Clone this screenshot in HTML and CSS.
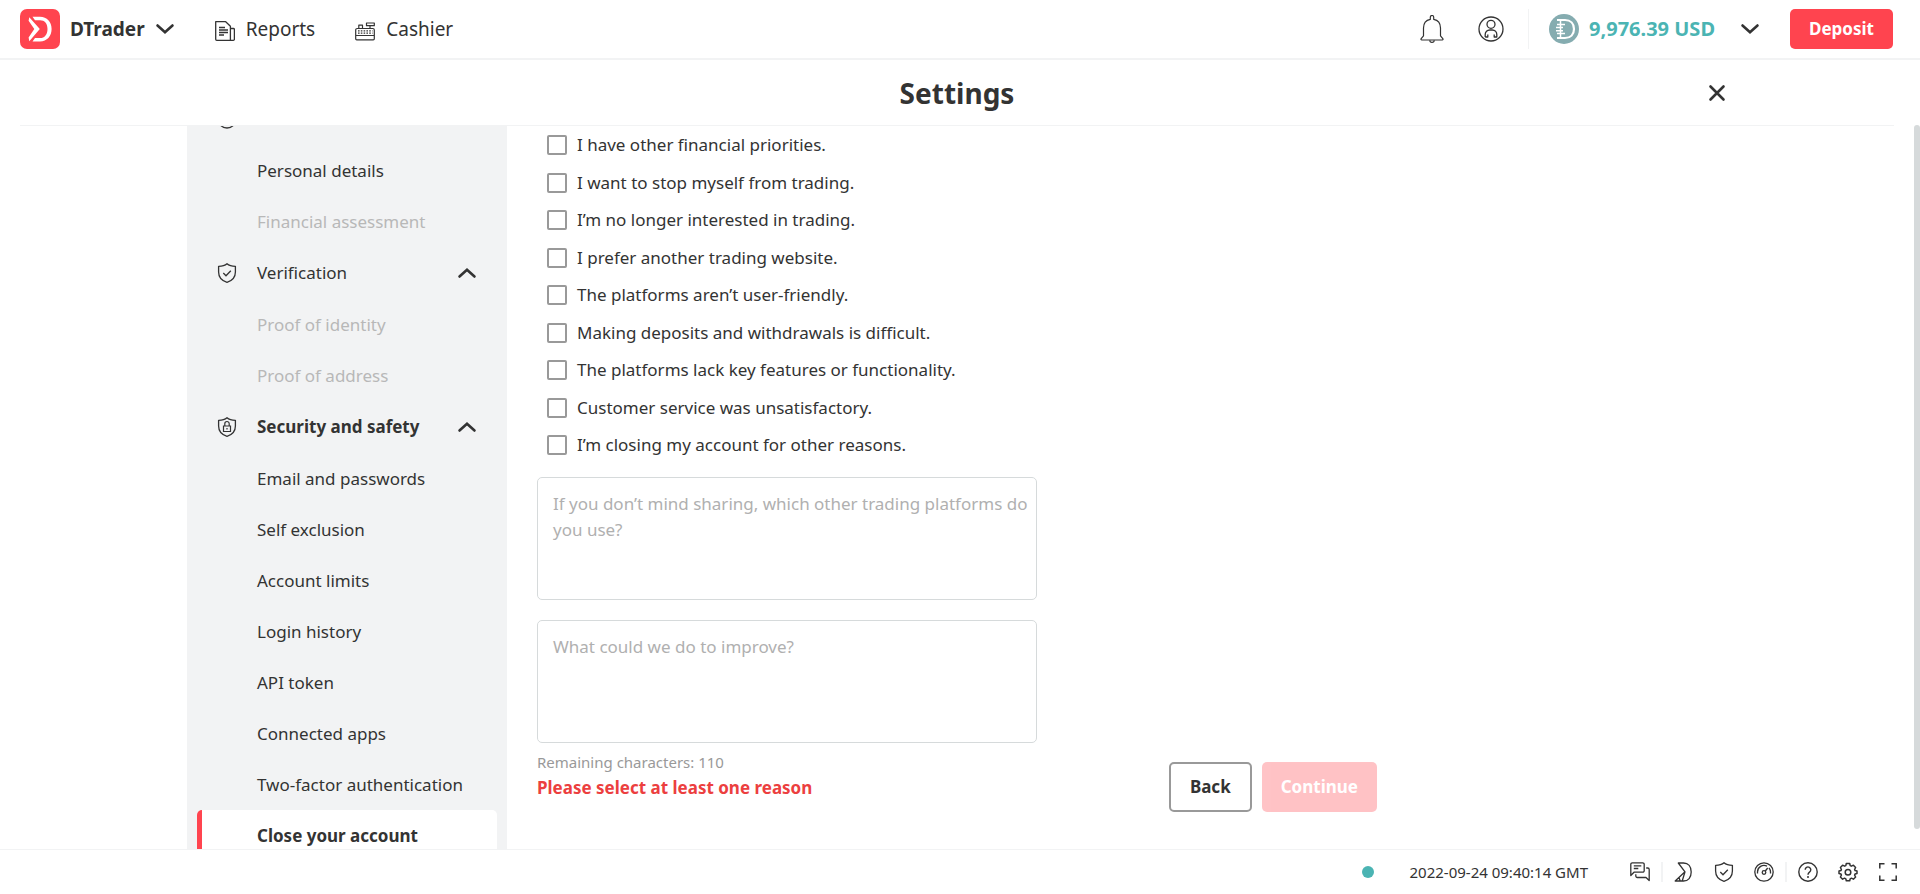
FILE: index.html
```html
<!DOCTYPE html>
<html lang="en">
<head>
<meta charset="utf-8">
<meta name="viewport" content="width=device-width, initial-scale=1">
<title>Settings | DTrader</title>
<link rel="stylesheet" href="styles.css">
</head>
<body class="app">
<svg class="sprite" aria-hidden="true">
  <symbol id="chevron" viewBox="0 0 20 20"><path d="M2.500 6.500 10 13.200 17.500 6.500" fill="none" stroke="currentColor" stroke-width="2.600" stroke-linecap="round" stroke-linejoin="miter"/></symbol>
  <symbol id="shield" viewBox="0 0 20 20"><path d="M10 .8C7.500 3 4.500 3.300 1.600 3.300V9c0 5.500 3.400 8.800 8.400 10.300 5-1.500 8.400-4.800 8.400-10.300V3.300C15.500 3.300 12.500 3 10 .8Z" fill="none" stroke="currentColor" stroke-width="1.300" stroke-linejoin="round"/></symbol>
</svg>

<header class="header">
  <button class="platform" type="button">
    <svg class="platform-logo" viewBox="0 0 40 40" aria-hidden="true"><rect width="40" height="40" rx="7" fill="#ff444f"/><path d="M12.500 7.800H20c7 0 11.600 5 11.600 12.200S27 32.400 20 32.400h-7.500l2.500-3.300h5c4.700 0 7.500-3.600 7.500-9.100s-2.800-8.800-7.500-8.800h-5Z" fill="#fff"/><path d="M9.300 8.200 19.800 20 9.300 32.200 8.600 28.500 14.300 20 8.600 11.800Z" fill="#fff"/></svg>
    <span class="platform-name">DTrader</span>
    <svg class="icon" aria-hidden="true"><use href="#chevron"/></svg>
  </button>
  <nav class="header-nav">
    <a class="header-link" href="#reports">
      <svg class="icon" viewBox="0 0 20 20" aria-hidden="true"><g fill="none" stroke="currentColor" stroke-width="1.300" stroke-linejoin="round"><path d="M15.400 19.300H1.700A1 1 0 0 1 .7 18.300V.7H10.700l4.700 4.600V19.300ZM15.400 7.500h3a1 1 0 0 1 1 1v9.800a1 1 0 0 1-1 1h-3"/><path d="M4 6.500h6M4 9h9M4 11.500h9M4 14h5"/></g></svg>
      Reports
    </a>
    <a class="header-link" href="#cashier">
      <svg class="icon" viewBox="0 0 20 20" aria-hidden="true"><g fill="none" stroke="currentColor" stroke-width="1.200" stroke-linejoin="round"><path d="M.7 14.500h18.600v3.300a1 1 0 0 1-1 1H1.700a1 1 0 0 1-1-1V9a1.500 1.500 0 0 1 1.500-1.500h15.600A1.500 1.500 0 0 1 19.300 9v5.500M3.800 7.500V4.200h3.700v3.300M15 7.500V4.700M11.500 2h7.800v2.700h-7.800Z"/><path d="M3 9.800h14.500M3 12.200h14.500" stroke-width="1.300" stroke-dasharray="1.600 1.200"/></g></svg>
      Cashier
    </a>
  </nav>
  <div class="account">
    <button class="icon-button" type="button" aria-label="Notifications"><svg class="icon-bell" viewBox="0 0 24 28" aria-hidden="true"><g fill="none" stroke="currentColor" stroke-width="1.200" stroke-linejoin="round"><path d="M10.300 4.300V2.200a1.700 1.700 0 0 1 3.400 0v2.100c4.300.8 6.800 4.200 6.800 8.700v7.800l2.300 2.800c.5.700.2 1.400-.6 1.400H1.800c-.8 0-1.100-.7-.6-1.400l2.300-2.800V13c0-4.500 2.500-7.900 6.800-8.700Z"/><path d="M9.800 25.200a2.200 2.200 0 0 0 4.400 0"/></g></svg></button>
    <button class="icon-button" type="button" aria-label="Profile"><svg class="icon-user" viewBox="0 0 26 26" aria-hidden="true"><g fill="none" stroke="currentColor" stroke-width="1.300" stroke-linejoin="round"><circle cx="13" cy="13" r="12"/><circle cx="13" cy="8.300" r="4"/><path d="M7.200 21v-2.500a4.500 4.500 0 0 1 4.500-4.500h2.600a4.500 4.500 0 0 1 4.500 4.500V21h-2.600v-2.500M9.800 18.500V21H7.200"/></g></svg></button>
    <button class="balance" type="button">
      <svg class="coin" viewBox="0 0 30 30" aria-hidden="true"><circle cx="15" cy="15" r="15" fill="#85acb0"/><path d="M8 6h8c5.500 0 9 3.600 9 9s-3.500 9-9 9H8" fill="none" stroke="#fff" stroke-width="2.200"/><path d="M11.500 6v18M8 10.500h8M8 19.500h8M7 13.500h7M7 16.700h7" fill="none" stroke="#fff" stroke-width="1.500"/></svg>
      <span class="amount">9,976.39 USD</span>
      <svg class="icon" aria-hidden="true"><use href="#chevron"/></svg>
    </button>
    <button class="button button-primary deposit" type="button">Deposit</button>
  </div>
</header>

<main class="settings">
  <div class="page">
    <div class="title-bar">
      <h1 class="title">Settings</h1>
      <button class="close" type="button" aria-label="Close"><svg class="icon" viewBox="0 0 20 20" aria-hidden="true"><path d="m3.500 3.500 13 13m0-13-13 13" stroke="currentColor" stroke-width="2.600" stroke-linecap="round"/></svg></button>
    </div>
    <div class="columns">
      <nav class="sidebar" aria-label="Settings">
        <div class="side-head side-head-first"><svg class="icon" viewBox="0 0 20 20" aria-hidden="true"><circle cx="10" cy="10" r="9" fill="none" stroke="currentColor" stroke-width="1.300"/></svg></div>
        <a class="side-item" href="#personal">Personal details</a>
        <a class="side-item is-disabled" href="#assessment">Financial assessment</a>
        <button class="side-head" type="button">
          <svg class="icon" viewBox="0 0 20 20" aria-hidden="true"><use href="#shield"/><path d="m6.300 10 2.700 2.700 4.800-5" fill="none" stroke="currentColor" stroke-width="1.300"/></svg>
          <span>Verification</span>
          <svg class="icon flipped" aria-hidden="true"><use href="#chevron"/></svg>
        </button>
        <a class="side-item is-disabled" href="#identity">Proof of identity</a>
        <a class="side-item is-disabled" href="#address">Proof of address</a>
        <button class="side-head is-current" type="button">
          <svg class="icon" viewBox="0 0 20 20" aria-hidden="true"><use href="#shield"/><path d="M6.500 9h7v5.500h-7ZM7.800 9V6.700a2.200 2.200 0 0 1 4.400 0V9M10 11v1.500" fill="none" stroke="currentColor" stroke-width="1.200"/></svg>
          <span>Security and safety</span>
          <svg class="icon flipped" aria-hidden="true"><use href="#chevron"/></svg>
        </button>
        <a class="side-item" href="#passwords">Email and passwords</a>
        <a class="side-item" href="#exclusion">Self exclusion</a>
        <a class="side-item" href="#limits">Account limits</a>
        <a class="side-item" href="#history">Login history</a>
        <a class="side-item" href="#token">API token</a>
        <a class="side-item" href="#apps">Connected apps</a>
        <a class="side-item" href="#two-factor">Two-factor authentication</a>
        <a class="side-item is-active" href="#close" aria-current="page">Close your account</a>
      </nav>
      <form class="form">
        <div class="reasons">
          <label class="reason"><input class="box" type="checkbox">I have other financial priorities.</label>
          <label class="reason"><input class="box" type="checkbox">I want to stop myself from trading.</label>
          <label class="reason"><input class="box" type="checkbox">I’m no longer interested in trading.</label>
          <label class="reason"><input class="box" type="checkbox">I prefer another trading website.</label>
          <label class="reason"><input class="box" type="checkbox">The platforms aren’t user-friendly.</label>
          <label class="reason"><input class="box" type="checkbox">Making deposits and withdrawals is difficult.</label>
          <label class="reason"><input class="box" type="checkbox">The platforms lack key features or functionality.</label>
          <label class="reason"><input class="box" type="checkbox">Customer service was unsatisfactory.</label>
          <label class="reason"><input class="box" type="checkbox">I’m closing my account for other reasons.</label>
        </div>
        <textarea class="field" aria-label="Other trading platforms" placeholder="If you don’t mind sharing, which other trading platforms do you use?"></textarea>
        <textarea class="field" aria-label="Improvements" placeholder="What could we do to improve?"></textarea>
        <div class="form-end">
          <div class="hints">
            <p class="remaining">Remaining characters: 110</p>
            <p class="error">Please select at least one reason</p>
          </div>
          <div class="actions">
            <button class="button button-secondary" type="button">Back</button>
            <button class="button button-primary" type="submit" disabled>Continue</button>
          </div>
        </div>
      </form>
    </div>
  </div>
  <div class="scroll-track"><div class="scroll-thumb"></div></div>
</main>

<footer class="footer">
  <span class="status-dot"></span>
  <time class="clock" datetime="2022-09-24T09:40:14Z">2022-09-24 09:40:14 GMT</time>
  <div class="tools">
    <a class="tool" href="#chat" aria-label="Live chat"><svg class="icon" viewBox="0 0 20 20"><g fill="none" stroke="currentColor" stroke-width="1.300" stroke-linejoin="round"><path d="M.8 13.500V2.300A1.500 1.500 0 0 1 2.300.8h10.400a1.500 1.500 0 0 1 1.500 1.500v6.400a1.500 1.500 0 0 1-1.500 1.500H4Z"/><path d="M3.800 3.800h7.500M3.800 6.500h4.500M16.200 6h1.500a1.500 1.500 0 0 1 1.500 1.500v11l-3.200-3H7.300a1.500 1.500 0 0 1-1.500-1.500v-1.700"/></g></svg></a>
    <span class="divider"></span>
    <a class="tool" href="#home" aria-label="Deriv"><svg class="icon" viewBox="0 0 20 20"><path d="M4.300 1h5.200c4.800 0 7.700 3.500 7.700 9s-2.900 9-7.700 9H1.200L11 9.800ZM11 9.800 8.200 19M5 15.500 6.200 19" fill="none" stroke="currentColor" stroke-width="1.300" stroke-linejoin="round"/></svg></a>
    <a class="tool" href="#responsible" aria-label="Responsible trading"><svg class="icon" viewBox="0 0 20 20"><use href="#shield"/><path d="m6.300 10 2.700 2.700 4.800-5" fill="none" stroke="currentColor" stroke-width="1.300"/></svg></a>
    <a class="tool" href="#limits" aria-label="Account limits"><svg class="icon" viewBox="0 0 20 20"><g fill="none" stroke="currentColor" stroke-width="1.300"><circle cx="10" cy="10" r="9.200"/><circle cx="10" cy="10.500" r="1.800"/><path d="m11.300 9 2.400-3M3.500 11.500V10a6.500 6.500 0 0 1 9.500-5.800M15 5.900a6.500 6.500 0 0 1 1.500 4.100v1.500"/></g></svg></a>
    <span class="divider"></span>
    <a class="tool" href="#help" aria-label="Help centre"><svg class="icon" viewBox="0 0 20 20"><g fill="none" stroke="currentColor" stroke-width="1.400"><circle cx="10" cy="10" r="9.200"/><path d="M7.200 7.800a2.800 2.800 0 1 1 4.300 2.300c-1 .7-1.500 1.200-1.500 2.600"/></g><circle cx="10" cy="15" r="1" fill="currentColor"/></svg></a>
    <button class="tool" type="button" aria-label="Platform settings"><svg class="icon" viewBox="0 0 20 20"><g fill="none" stroke="currentColor" stroke-width="1.500" stroke-linejoin="round"><path d="M8.300 1.500h3.400l.5 2.100 1.200.6 2-1 2.200 2.300-1 2 .5 1.100 1.900.4v2.400l-1.900.5-.5 1.200 1 1.900-2.200 2.200-2-1-1.200.6-.5 2H8.300l-.5-2-1.200-.6-2 1L2.400 15l1-1.900-.5-1.200-1.900-.5V9l1.900-.4.5-1.100-1-2 2.200-2.300 2 1 1.200-.6Z"/><circle cx="10" cy="10.200" r="2.800"/></g></svg></button>
    <button class="tool" type="button" aria-label="Full screen"><svg class="icon" viewBox="0 0 20 20"><path d="M1.800 6.500V1.800h4.700M13.500 1.800h4.700v4.700M18.200 13.500v4.700h-4.700M6.500 18.200H1.800v-4.700" fill="none" stroke="currentColor" stroke-width="1.500"/></svg></button>
  </div>
</footer>
</body>
</html>
```
FILE: styles.css
```css
*,
*::before,
*::after {
  box-sizing: border-box;
}

.app {
  display: flex;
  flex-direction: column;
  height: 100vh;
  margin: 0;
  overflow: hidden;
  background: #fff;
  color: #333;
  font-family: "Noto Sans", "IBM Plex Sans", sans-serif;
  font-size: 17px;
  line-height: 26px;
}

button,
textarea {
  color: inherit;
  font: inherit;
}

button {
  padding: 0;
  border: 0;
  background: none;
  cursor: pointer;
}

a {
  color: inherit;
  text-decoration: none;
}

.sprite {
  display: none;
}

.icon {
  flex: none;
  width: 20px;
  height: 20px;
}

/* Header */

.header {
  display: flex;
  flex: none;
  align-items: center;
  height: 60px;
  padding: 0 27px 0 20px;
  border-bottom: 2px solid #f2f3f4;
}

.platform {
  display: flex;
  align-items: center;
}

.platform-logo {
  width: 40px;
  height: 40px;
  margin-right: 10px;
}

.platform-name {
  margin-right: 10px;
  font-size: 19px;
  font-weight: 700;
}

.header-nav {
  display: flex;
  gap: 40px;
  margin-left: 40px;
}

.header-link {
  display: flex;
  align-items: center;
  gap: 11px;
  font-size: 19px;
}

.header-link .icon {
  margin-top: 4px;
}

.account {
  display: flex;
  align-items: center;
  margin-left: auto;
}

.icon-button {
  display: flex;
  margin-right: 34px;
}

.icon-bell {
  width: 24px;
  height: 28px;
}

.icon-user {
  width: 26px;
  height: 26px;
}

.icon-button + .balance {
  margin-left: -10px;
}

.balance {
  display: flex;
  align-items: center;
  height: 40px;
  padding-left: 20px;
  border-left: 1px solid #f2f3f4;
}

.coin {
  width: 30px;
  height: 30px;
  margin-right: 10px;
}

.amount {
  margin-right: 25px;
  color: #4bb4b3;
  font-size: 20px;
  font-weight: 700;
}

.button {
  height: 50px;
  padding: 0 19px;
  border-radius: 5px;
  font-weight: 700;
}

.button-primary {
  background: #ff444f;
  color: #fff;
}

.button-primary:disabled {
  opacity: 0.32;
}

.button-secondary {
  border: 2px solid #999;
}

.deposit {
  height: 40px;
  margin-left: 30px;
}

/* Settings page */

.settings {
  display: flex;
  flex: 1;
  min-height: 0;
}

.page {
  display: flex;
  flex: 1;
  flex-direction: column;
  min-width: 0;
}

.title-bar {
  display: grid;
  flex: none;
  grid-template-columns: 1fr auto 1fr;
  align-items: center;
  height: 66px;
  margin: 0 20px;
  padding: 0 167px;
  border-bottom: 1px solid #f2f3f4;
}

.title {
  grid-column: 2;
  margin: 0;
  font-size: 28px;
  font-weight: 700;
  line-height: 40px;
}

.close {
  display: flex;
  justify-self: end;
}

.columns {
  display: flex;
  flex: 1;
  width: 100%;
  max-width: 1540px;
  min-height: 0;
  margin: 0 auto;
  overflow: hidden;
}

.sidebar {
  flex: none;
  width: 320px;
  padding: 0 10px;
  overflow: hidden;
  background: #f2f3f4;
}

.side-item,
.side-head {
  display: flex;
  align-items: center;
  width: 100%;
  height: 51px;
  padding: 0 20px 0 60px;
  border-radius: 5px;
  white-space: nowrap;
}

.side-head {
  height: 52px;
  padding: 0 20px;
}

.side-head span {
  flex: 1;
  margin-left: 20px;
  text-align: left;
}

.side-head-first {
  margin-top: -33px;
}

.flipped {
  transform: rotate(180deg);
}

.is-disabled {
  color: #b8b8b8;
}

.is-current {
  font-weight: 700;
}

.is-active {
  padding-left: 55px;
  border-left: 5px solid #ff444f;
  background: #fff;
  font-weight: 700;
}

.form {
  flex: 1;
  max-width: 870px;
  padding-left: 30px;
}

.reasons {
  display: grid;
  grid-auto-rows: 38px 37px;
  justify-items: start;
  margin-bottom: 13px;
  padding-left: 10px;
}

.reason {
  display: flex;
  align-items: center;
  gap: 10px;
}

.box {
  width: 20px;
  height: 20px;
  margin: 0;
  border: 2px solid #999;
  border-radius: 2px;
  appearance: none;
}

.box:checked {
  border-color: #ff444f;
  background: #ff444f;
}

.field {
  display: block;
  width: 500px;
  max-width: 100%;
  height: 123px;
  padding: 13px 5px 13px 15px;
  border: 1px solid #d6dadb;
  border-radius: 5px;
  background: none;
  resize: none;
}

.field + .field {
  margin-top: 20px;
}

.field::placeholder {
  color: #b0b0b0;
  opacity: 1;
}

.form-end {
  display: flex;
  justify-content: space-between;
}

.hints {
  padding-top: 6px;
}

.remaining,
.error {
  margin: 0;
}

.remaining {
  color: #999;
  font-size: 15px;
}

.error {
  color: #ec3f3f;
  font-weight: 700;
}

.actions {
  display: flex;
  gap: 10px;
  margin-top: 19px;
}

.scroll-track {
  flex: none;
  width: 6px;
  padding: 65px 0 20px;
}

.scroll-thumb {
  height: 100%;
  border-radius: 3px;
  background: #d6dadb;
}

/* Footer */

.footer {
  display: flex;
  flex: none;
  align-items: center;
  justify-content: flex-end;
  height: 45px;
  padding-right: 22px;
  border-top: 1px solid #f2f3f4;
}

.status-dot {
  width: 12px;
  height: 12px;
  border-radius: 50%;
  background: #4bb4b3;
}

.clock {
  margin: 0 42px 0 36px;
  font-size: 15px;
}

.tools {
  display: flex;
  align-items: center;
  gap: 20px;
}

.tool {
  display: flex;
}

.divider {
  width: 2px;
  height: 20px;
  margin: 0 -9px;
  background: #f2f3f4;
}
```
